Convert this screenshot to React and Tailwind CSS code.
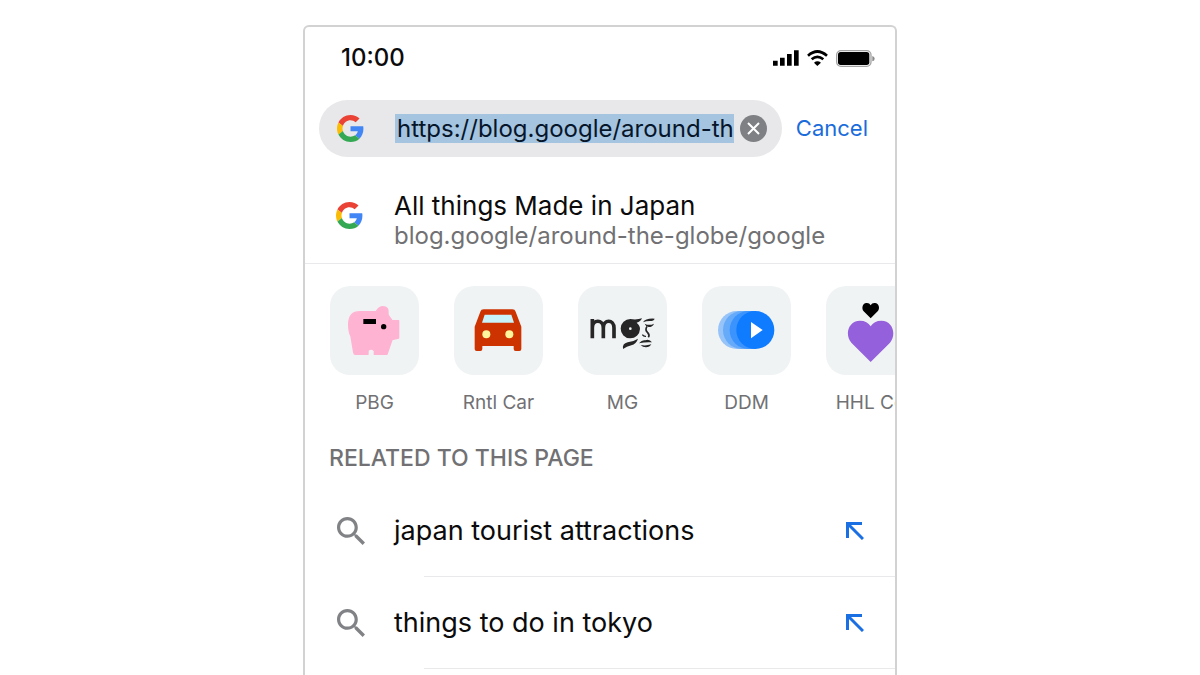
import React from 'react';

const shortcuts = [
  { label: 'PBG', icon: <PiggyIcon /> },
  { label: 'Rntl Car', icon: <CarIcon /> },
  { label: 'MG', icon: <FaceIcon /> },
  { label: 'DDM', icon: <PlayIcon /> },
  { label: 'HHL Co', icon: <HeartsIcon /> },
];

const related = ['japan tourist attractions', 'things to do in tokyo'];

function GoogleLogo() {
  return (
    <svg viewBox="0 0 48 48" className="h-[27px] w-[27px] shrink-0" aria-hidden="true">
      <path fill="#EA4335" d="M24 9.5c3.54 0 6.71 1.22 9.21 3.6l6.85-6.85C35.9 2.38 30.47 0 24 0 14.62 0 6.51 5.38 2.56 13.22l7.98 6.19C12.43 13.72 17.74 9.5 24 9.5z" />
      <path fill="#4285F4" d="M46.98 24.55c0-1.57-.15-3.09-.38-4.55H24v9.02h12.94c-.58 2.96-2.26 5.48-4.78 7.18l7.73 6c4.51-4.18 7.09-10.36 7.09-17.65z" />
      <path fill="#FBBC05" d="M10.53 28.59c-.48-1.45-.76-2.99-.76-4.59s.27-3.14.76-4.59l-7.98-6.19C.92 16.46 0 20.12 0 24c0 3.88.92 7.54 2.56 10.78l7.97-6.19z" />
      <path fill="#34A853" d="M24 48c6.48 0 11.93-2.13 15.89-5.81l-7.73-6c-2.15 1.45-4.92 2.3-8.16 2.3-6.26 0-11.57-4.22-13.47-9.91l-7.98 6.19C6.51 42.62 14.62 48 24 48z" />
    </svg>
  );
}

function PiggyIcon() {
  return (
    <svg viewBox="30 30 267 267" className="h-full w-full">
      <path
        fill="#ffb3d3"
        stroke="#ffb3d3"
        strokeWidth="4"
        strokeLinejoin="round"
        d="M120 107H166C173 107 172 92 188 92C203 92 205 101 204 111C201 119 213 125 216 134H236V186L216 191L201 235H163V224Q153 214 144 224V235H106Q102 235 101 229L93 181Q86 169 86 145Q86 107 120 107Z"
      />
      <path fill="#000" d="M130 129H168V144H130Z" />
      <circle cx="191" cy="152" r="8" />
    </svg>
  );
}

function CarIcon() {
  return (
    <svg viewBox="403 30 267 267" className="h-full w-full">
      <path
        fill="#cc3300"
        d="M492 100H578Q586 100 588 107L605 152V219Q605 225 599 225H588Q582 225 582 219V210H488V219Q488 225 482 225H471Q465 225 465 219V152L482 107Q484 100 492 100Z"
      />
      <path fill="#c9f3fa" d="M495 116H575L583 140H487Z" />
      <circle cx="500" cy="175" r="12" fill="#fff59d" />
      <circle cx="569" cy="175" r="12" fill="#fff59d" />
    </svg>
  );
}

function FaceIcon() {
  return (
    <svg viewBox="54 30 267 267" className="h-full w-full" fill="#262626">
      <path
        d="M97 187V129M97 156C97 129 130 129 130 156V187M130 156C130 129 162 129 162 156V187"
        fill="none"
        stroke="#262626"
        strokeWidth="11"
      />
      <path d="M211 129Q230 132 246 127Q242 137 230 140Q240 148 240 159A29 29 0 1 1 211 129Z" />
      <circle cx="211" cy="158" r="4" fill="#f1f3f4" />
      <path d="M189 219Q186 203 203 199Q220 197 234 188Q229 204 214 208Q200 211 189 219Z" />
      <path d="M249 139Q257 126 284 128Q282 135 270 135Q258 135 249 139Z" />
      <path d="M254 143Q268 150 282 143Q278 153 266 153Q257 152 254 143Z" />
      <path d="M261 151Q254 162 263 170Q270 178 265 184" fill="none" stroke="#262626" strokeWidth="5" />
      <path d="M247 176Q251 182 258 181" fill="none" stroke="#262626" strokeWidth="4" />
      <path d="M237 202Q247 190 256 193Q268 188 276 199Q258 197 237 202Z" />
      <path d="M242 207Q258 210 274 205Q269 214 258 214Q248 214 242 207Z" />
    </svg>
  );
}

function PlayIcon() {
  return (
    <svg viewBox="426 30 267 267" className="h-full w-full" fill="#0f7bff">
      <path opacity=".4" d="M531 105A57 57 0 0 0 531 219H586V105Z" />
      <path opacity=".35" d="M546 105A57 57 0 0 0 546 219H586V105Z" />
      <path opacity=".5" d="M566 105A57 57 0 0 0 566 219H586V105Z" />
      <circle cx="586" cy="162" r="57" />
      <path fill="#fff" d="M573 138L608 162L573 187Z" />
    </svg>
  );
}

function HeartsIcon() {
  return (
    <svg viewBox="138 30 267 267" className="h-full w-full">
      <path d="M272 127L251 106C244 98 247 82 259 81Q268 80 272 88Q276 80 285 81C297 82 301 98 293 106Z" />
      <path
        fill="#9560dc"
        d="M272 258L214 200C193 176 205 134 240 134Q262 134 272 151Q282 134 304 134C339 134 350 176 330 200Z"
      />
    </svg>
  );
}

function StatusBar() {
  return (
    <div className="flex h-[62px] items-center justify-between pr-5 pl-9">
      <time className="text-2xl font-medium">10:00</time>
      <div className="flex items-center gap-2">
        <svg viewBox="0 0 78 48" className="h-4 w-[26px]" aria-label="Signal">
          <path d="M0 32h14v15H0zM21 23h14v24H21zM42 12h14v35H42zM63 1h14v46H63z" />
        </svg>
        <svg viewBox="0 0 63 48" className="h-4 w-[21px]" fill="none" stroke="#000" strokeWidth="8" aria-label="Wi-Fi">
          <path d="M3 17Q31 -8 60 17M14 28Q31 13 49 28" />
          <path d="M31 48L21 38Q31 30 42 38Z" fill="#000" stroke="none" />
        </svg>
        <svg viewBox="0 0 117 51" className="h-[17px] w-[39px]" aria-label="Battery">
          <rect x="2" y="2" width="103" height="47" rx="13" fill="#fff" stroke="#a3a3a3" strokeWidth="4" />
          <rect x="6" y="6" width="94" height="39" rx="8" />
          <path d="M109 18Q116 20 116 26Q116 32 109 34Z" fill="#8a8a8a" />
        </svg>
      </div>
    </div>
  );
}

function SearchIcon() {
  return (
    <svg viewBox="3 3 17.5 17.5" className="h-7 w-7 shrink-0" fill="#808285" aria-hidden="true">
      <path d="M15.5 14h-.79l-.28-.27C15.41 12.59 16 11.11 16 9.5 16 5.91 13.09 3 9.5 3S3 5.91 3 9.5 5.91 16 9.5 16c1.61 0 3.09-.59 4.23-1.57l.27.28v.79l5 4.99L20.49 19l-4.99-5zm-6 0C7.01 14 5 11.99 5 9.5S7.01 5 9.5 5 14 7.01 14 9.5 11.99 14 9.5 14z" />
    </svg>
  );
}

function RelatedRow({ text }) {
  return (
    <li>
      <div className="flex h-[91px] items-center pr-[31px] pl-8">
        <SearchIcon />
        <a href="#" className="ml-[29px] flex-1 text-[27px] leading-8">
          {text}
        </a>
        <button type="button" aria-label={`Use ${text}`}>
          <svg viewBox="0 0 18 18" className="h-[18px] w-[18px]" fill="none" stroke="#1a6fe3" strokeWidth="3">
            <path d="M16 1.5H1.5V16M1.5 1.5L17 17" />
          </svg>
        </button>
      </div>
      <div className="ml-[119px] h-px bg-[#e9e9eb]" />
    </li>
  );
}

export default function App() {
  return (
    <main className="flex h-screen flex-col items-center overflow-hidden bg-white pt-[25px] font-['Inter',sans-serif] text-[#0b0b0c]">
      <div className="w-full max-w-[594px] flex-1 overflow-hidden rounded-t-md border-2 border-b-0 border-[#d2d2d3]">
        <StatusBar />

        <form className="mt-[11px] flex items-center gap-3.5 pr-[27px] pl-3.5">
          <div className="flex h-[57px] min-w-0 flex-1 items-center rounded-full bg-[#e8e8ea] pr-[15px] pl-[18px]">
            <GoogleLogo />
            <input
              type="text"
              aria-label="Address"
              defaultValue="https://blog.google/around-th"
              className="ml-[31px] h-[29px] min-w-0 flex-1 bg-[#a4c4e0] pl-0.5 text-2xl text-[#06162a] outline-none"
            />
            <button type="reset" aria-label="Clear" className="ml-1.5">
              <svg viewBox="0 0 27 27" className="h-[27px] w-[27px]">
                <circle cx="13.5" cy="13.5" r="13.5" fill="#7f8084" />
                <path d="M8 8L19 19M19 8L8 19" stroke="#fff" strokeWidth="2" />
              </svg>
            </button>
          </div>
          <button type="button" className="text-[22px] text-[#1a6cdb]">
            Cancel
          </button>
        </form>

        <a href="#" className="flex items-start border-b border-[#e9e9eb] pt-[34px] pb-[11px] pl-[31px]">
          <span className="pt-[11px]">
            <GoogleLogo />
          </span>
          <span className="ml-[31px] flex flex-col leading-[29px]">
            <span className="text-[26px]">All things Made in Japan</span>
            <span className="text-2xl text-[#717174]">blog.google/around-the-globe/google</span>
          </span>
        </a>

        <nav className="flex gap-[35px] overflow-hidden pt-[22px] pl-[25px]">
          {shortcuts.map(({ label, icon }) => (
            <a key={label} href="#" className="flex w-[89px] shrink-0 flex-col items-center gap-4">
              <span className="h-[89px] w-[89px] overflow-hidden rounded-[20px] bg-[#f0f3f4]">{icon}</span>
              <span className="text-[19px] leading-6 whitespace-nowrap text-[#717174]">{label}</span>
            </a>
          ))}
        </nav>

        <h2 className="mt-[29px] pl-6 text-[23px] leading-7 font-medium text-[#717174]">RELATED TO THIS PAGE</h2>

        <ul className="mt-[13px]">
          {related.map((text) => (
            <RelatedRow key={text} text={text} />
          ))}
        </ul>
      </div>
    </main>
  );
}
